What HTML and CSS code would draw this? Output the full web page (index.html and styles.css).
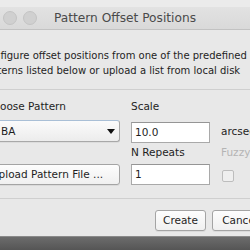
FILE: index.html
```html
<!DOCTYPE html>
<html>
<head>
<meta charset="utf-8">
<link rel="stylesheet" href="styles.css">
</head>
<body>
<div class="screen">
  <div class="top-strip"></div>
  <div class="window">
    <div class="titlebar">
      <div class="lights"><span class="light"></span><span class="light"></span></div>
      <div class="title">Pattern Offset Positions</div>
      <div></div>
    </div>
    <div class="dialog">
      <p class="intro">Configure offset positions from one of the predefined<br>patterns listed below or upload a list from local disk</p>
      <div class="sep"></div>
      <div class="form">
        <div class="label lbl-pattern">Choose Pattern</div>
        <div class="label">Scale</div>
        <div></div>
        <div class="combo"><span class="combo-text">BA</span><span class="arrow"></span></div>
        <div class="field field-scale">10.0</div>
        <div class="unit">arcsec</div>
        <div></div>
        <div class="label">N Repeats</div>
        <div class="label disabled">Fuzzy</div>
        <div class="button upload">Upload Pattern File ...</div>
        <div class="field">1</div>
        <div class="check-cell"><span class="checkbox"></span></div>
      </div>
      <div class="sep sep-bottom"></div>
      <div class="actions">
        <div class="button action">Create</div>
        <div class="button action cancel">Cancel</div>
      </div>
    </div>
  </div>
  <div class="desk"></div>
</div>
</body>
</html>
```
FILE: styles.css
```css
html, body {
  margin: 0;
  padding: 0;
}
body {
  width: 250px;
  height: 250px;
  overflow: hidden;
  background: #e8e8e8;
  font-family: "DejaVu Sans", "Liberation Sans", sans-serif;
  font-size: 10.5px;
  color: #1e1e1e;
}
.screen {
  width: 250px;
  height: 250px;
  display: flex;
  flex-direction: column;
  overflow: hidden;
}
.top-strip {
  height: 7px;
  background: #ebebeb;
  flex: none;
}
.window {
  flex: none;
  display: flex;
  flex-direction: column;
}
.titlebar {
  height: 22px;
  border-bottom: 1px solid #c2c2c2;
  background: linear-gradient(#e2e2e2, #d9d9d9);
  display: grid;
  grid-template-columns: 1fr auto 1fr;
  align-items: center;
}
.lights {
  display: flex;
  gap: 6px;
  padding-left: 3px;
}
.light {
  width: 12px;
  height: 12px;
  border-radius: 50%;
  background: #d0d0d0;
  border: 0.5px solid #c4c4c4;
}
.title {
  font-size: 12.2px;
  color: #4a4a4a;
}
.dialog {
  margin-left: -20px;
  width: 300px;
  display: flex;
  flex-direction: column;
}
.intro {
  margin: 18px 0 0 0;
  padding-left: 1px;
  line-height: 15px;
  font-size: 10px;
  white-space: nowrap;
}
.sep {
  height: 1px;
  background: #cfcfcf;
  margin-top: 11px;
  margin-right: -20px;
}
.form {
  display: grid;
  grid-template-columns: 134px 79px 60px;
  column-gap: 11px;
  margin-left: 6px;
  margin-top: 9px;
  grid-template-rows: 15px 31px 15px 28px;
  align-items: start;
}
.label {
  line-height: 15px;
  white-space: nowrap;
}
.disabled {
  color: #b4b4b4;
}
.combo {
  margin-top: 6px;
  height: 20px;
  border: 1px solid #a8a8a8;
  border-top-color: #a9bfd6;
  border-radius: 3px;
  background: linear-gradient(#fbfbfb, #ececec);
  display: flex;
  align-items: center;
  justify-content: space-between;
  padding: 0 4px 0 14px;
  box-shadow: 0 1px 0 rgba(0,0,0,0.05);
}
.combo-text {
  line-height: 15px;
}
.arrow {
  width: 0;
  height: 0;
  border-left: 4px solid transparent;
  border-right: 4px solid transparent;
  border-top: 5px solid #111;
}
.field {
  margin-top: 4px;
  height: 19px;
  border: 1px solid #a9a9a9;
  border-top-color: #959595;
  background: #fff;
  padding-left: 3px;
  line-height: 19px;
}
.field-scale {
  margin-top: 8px;
}
.unit {
  margin-top: 10px;
  line-height: 15px;
}
.button {
  height: 19px;
  border: 1px solid #a4a4a4;
  border-radius: 3px;
  background: linear-gradient(#fdfdfd, #f0f0f0);
  text-align: center;
  line-height: 19px;
  white-space: nowrap;
  box-shadow: 0 1px 0 rgba(0,0,0,0.06);
}
.upload {
  margin-top: 4px;
  padding-right: 12px;
}
.check-cell {
  padding-top: 10px;
  padding-left: 1px;
}
.checkbox {
  display: block;
  width: 10px;
  height: 10px;
  border: 1px solid #bdbdbd;
  border-radius: 2px;
  background: #efefef;
}
.sep-bottom {
  margin-top: 10px;
}
.actions {
  display: flex;
  justify-content: flex-end;
  gap: 6px;
  padding-right: 12px;
  margin-top: 11px;
  height: 26px;
}
.action {
  width: 49px;
}
.cancel {
  width: 54px;
}
.desk {
  flex: 1;
  background: linear-gradient(#6c6c6c, #555555);
  border-top: 1px solid #8a8a8a;
}
```
